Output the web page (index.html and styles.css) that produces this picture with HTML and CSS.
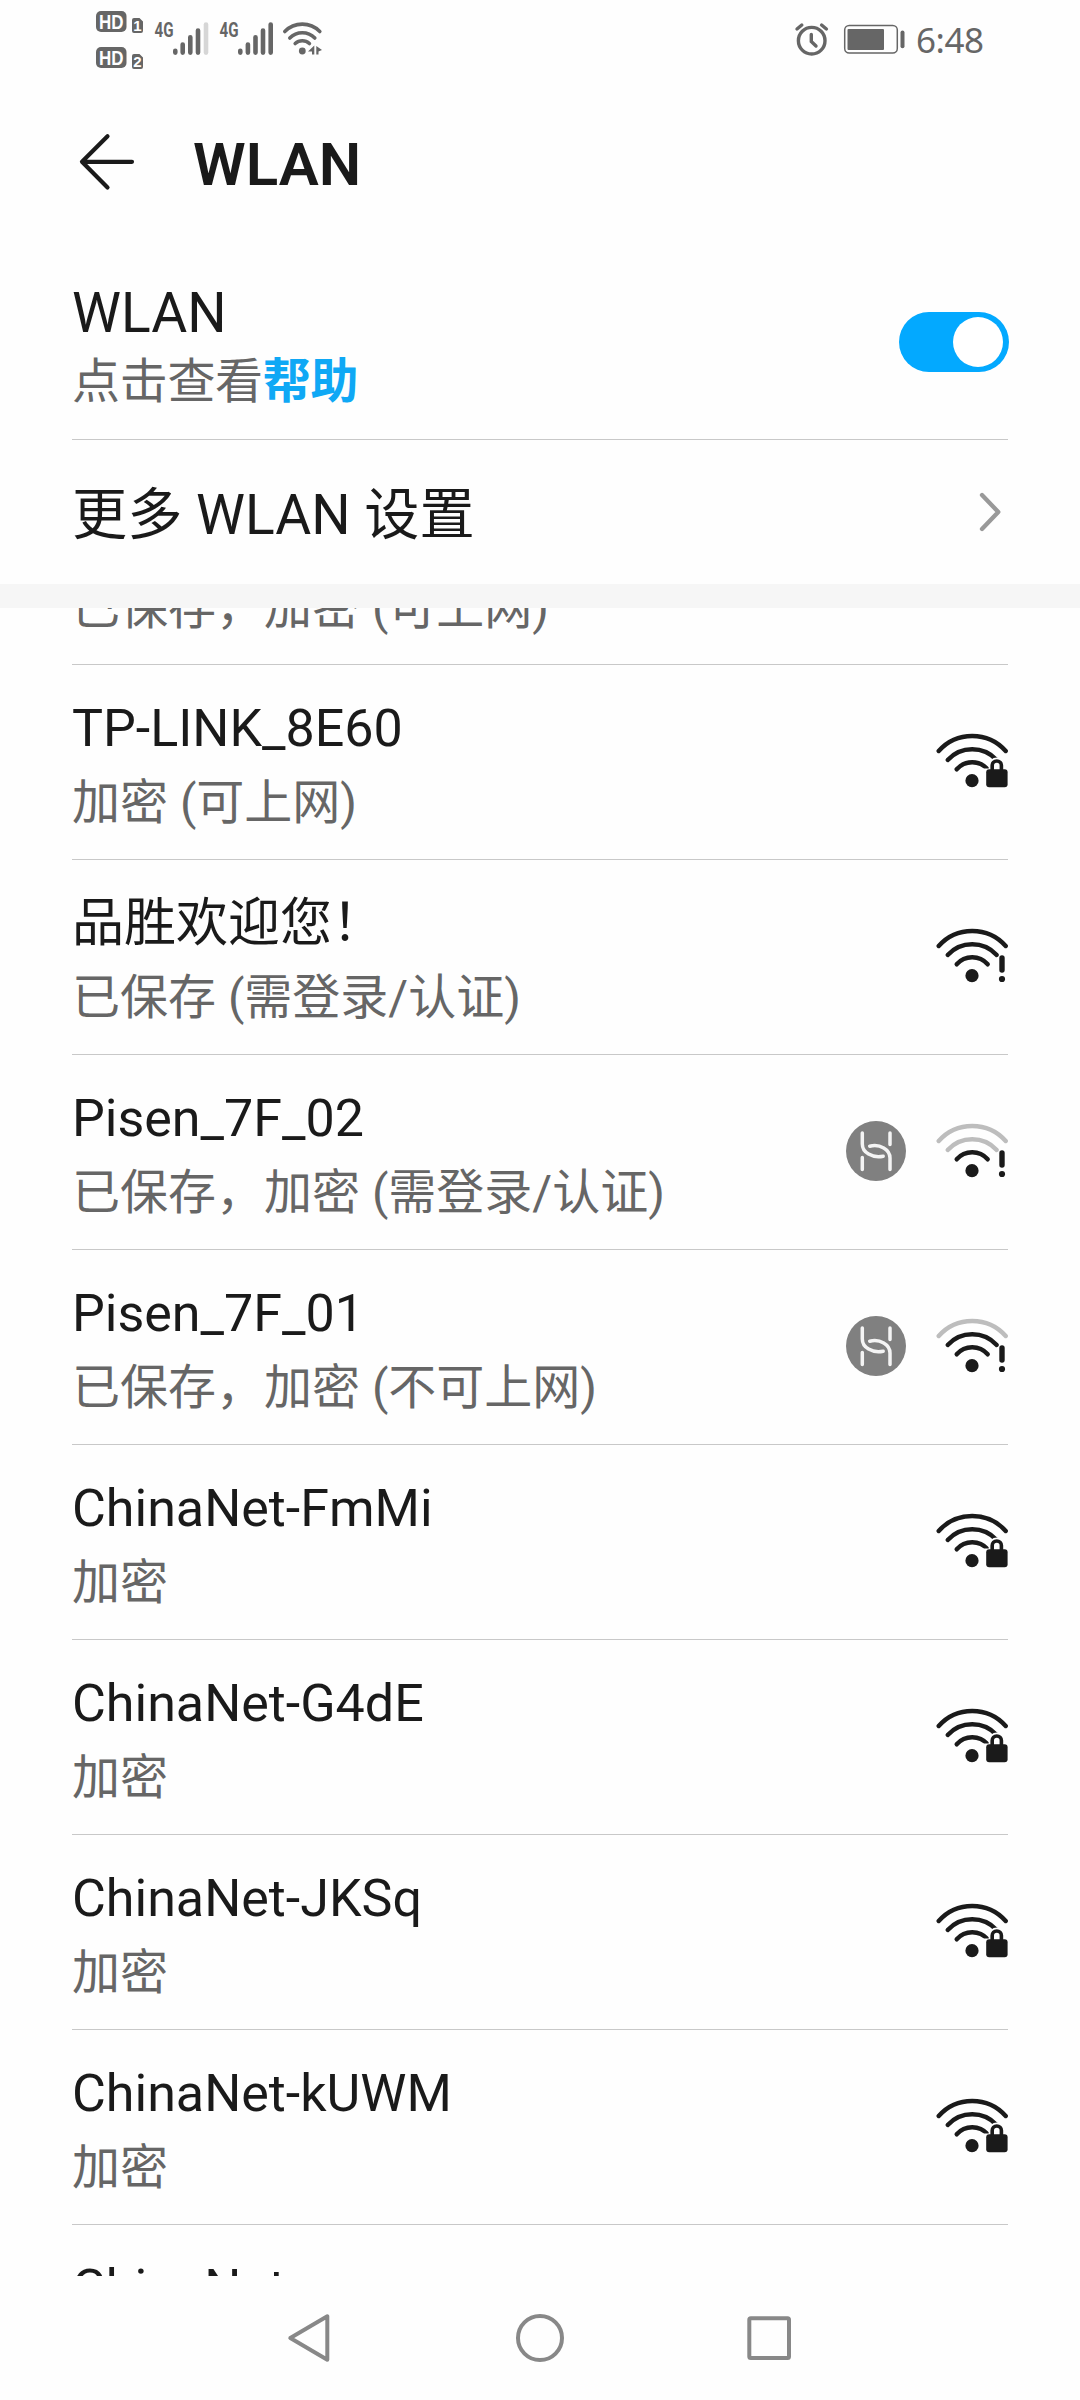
FILE: index.html
```html
<!DOCTYPE html>
<html lang="zh-CN">
<head>
<meta charset="utf-8">
<title>WLAN</title>
<link rel="stylesheet" href="styles.css">
</head>
<body>
<svg class="defs" width="0" height="0" aria-hidden="true">
  <symbol id="arc-outer" viewBox="0 0 72 60"><path class="arc" d="M2.7 19A44.9 44.9 0 0 1 69.7 19"/></symbol>
  <symbol id="arc-mid" viewBox="0 0 72 60"><path class="arc" d="M11.7 28A33.4 33.4 0 0 1 60.7 28"/></symbol>
  <symbol id="arc-inner" viewBox="0 0 72 60"><path class="arc" d="M20.7 37.3A20.6 20.6 0 0 1 51.7 37.3"/><circle cx="36" cy="48.7" r="6.6" fill="currentColor"/></symbol>
  <symbol id="bang" viewBox="0 0 72 60"><path d="M66 31V43" stroke="currentColor" stroke-width="5.4" stroke-linecap="round"/><circle cx="66" cy="52" r="3.1" fill="currentColor"/></symbol>
  <symbol id="wifi-lock" viewBox="0 0 72 60">
    <use href="#arc-outer"/><use href="#arc-mid"/><use href="#arc-inner"/>
    <path class="halo" d="M56.2 38V33.5A4.6 4.6 0 0 1 65.4 33.5V38M50.5 40H71V54H50.5z"/>
    <path d="M56.2 40V33.6A4.6 4.6 0 0 1 65.4 33.6V40" fill="none" stroke="currentColor" stroke-width="3.6"/>
    <rect x="50.2" y="37.3" width="21.4" height="18" rx="3" fill="currentColor"/>
  </symbol>
  <symbol id="link-h" viewBox="0 0 60 60">
    <circle cx="30" cy="30" r="30" fill="#808080"/>
    <path class="hline" d="M16.3 12V23C16.3 31.5 26 37.3 37.2 35.2M44 48.5V37C44 28.5 34 22.7 23.7 25.2M44 12V23.5M16.3 36.5V48.5"/>
  </symbol>
</svg>
<div class="screen">
  <header class="status">
    <svg width="248" height="80" viewBox="80 0 248 80" fill="#666">
      <rect x="96" y="11" width="30.5" height="21" rx="5"/><rect x="96" y="47" width="30.5" height="21" rx="5"/>
      <path d="M134 18H139.500L143 21.500V31Q143 33 141 33H134Q132 33 132 31V20Q132 18 134 18zM134 54H139.500L143 57.500V67Q143 69 141 69H134Q132 69 132 67V56Q132 54 134 54z"/>
      <g class="hd"><text x="99" y="28.5" textLength="24.5" lengthAdjust="spacingAndGlyphs">HD</text><text x="99" y="64.5" textLength="24.5" lengthAdjust="spacingAndGlyphs">HD</text></g>
      <g class="sim"><text x="137.5" y="30.5">1</text><text x="137.5" y="66.5">2</text></g>
      <g class="net"><text x="154.5" y="36.5" textLength="19" lengthAdjust="spacingAndGlyphs">4G</text><text x="219.5" y="36.5" textLength="19" lengthAdjust="spacingAndGlyphs">4G</text></g>
      <g stroke="#666" stroke-width="4.6" stroke-linecap="round" fill="none">
        <path d="M175.3 50.7V52.6M182.7 44.5V52.6M190.3 37.3V52.6M198 30.6V52.6"/>
        <path d="M206 24.5V52.6" stroke="#d6d6d6"/>
        <path d="M240.3 50.7V52.6M247.9 44.5V52.6M255.5 37.3V52.6M263 30.6V52.6M270.7 24.5V52.6"/>
        <path stroke-width="3.6" d="M284.8 31.5A24.5 24.5 0 0 1 319.8 31.5M289.8 38A17.5 17.5 0 0 1 314.8 38M295.2 43.5A10.5 10.5 0 0 1 309.4 43.5"/>
      </g>
      <circle cx="302.3" cy="51" r="3.4"/>
      <path d="M308 51.5L314.3 45.5V54.5H312V51.5zM316.3 46L322 50L318.5 51.5V54.5H316.3z"/>
    </svg>
    <div class="status-right">
      <svg width="116" height="80" viewBox="792 0 116 80" fill="none" stroke="#666" stroke-linecap="round">
        <circle cx="811.7" cy="40.7" r="13.3" stroke-width="3.4"/>
        <path stroke-width="3.4" d="M811.3 34.5V41.5L816 46M797 29L801.8 25M821.6 25L826.4 29"/>
        <rect x="844.7" y="25.5" width="52.6" height="27.6" rx="4.5" stroke-width="1.5"/>
        <rect x="847.5" y="29" width="36.5" height="21" rx="1" fill="#666" stroke="none"/>
        <path d="M902.5 32.5V46.3" stroke-width="4"/>
      </svg>
      <span class="clock">6:48</span>
    </div>
  </header>
  <div class="titlebar">
    <svg width="58" height="58" viewBox="78 133 58 58"><path d="M107.5 136.2L82 161.8L107.5 187.4M82 161.8H132" fill="none" stroke="#1a1a1a" stroke-width="4.2" stroke-linecap="round" stroke-linejoin="round"/></svg>
    <h1 class="title">WLAN</h1>
  </div>
  <section class="setting toggle-row">
    <div class="toggle-text">
      <div class="label">WLAN</div>
      <div class="sub hint">点击查看<a class="help">帮助</a></div>
    </div>
    <span class="switch"><span class="knob"></span></span>
  </section>
  <section class="setting more-row">
    <div class="label more">更多 WLAN 设置</div>
    <svg class="chevron" width="24" height="42" viewBox="0 0 24 42"><path d="M4 4L20.3 21L4 38" fill="none" stroke="#999" stroke-width="4.3" stroke-linecap="round" stroke-linejoin="round"/></svg>
  </section>
  <div class="band"></div>
  <main class="list">
    <div class="row row-first"><div class="sub">已保存，加密 (可上网)</div></div>
    <div class="row"><div class="info"><div class="name">TP-LINK_8E60</div><div class="sub">加密 (可上网)</div></div><div class="icons"><svg class="wifi"><use href="#wifi-lock"/></svg></div></div>
    <div class="row"><div class="info"><div class="name">品胜欢迎您！</div><div class="sub">已保存 (需登录/认证)</div></div><div class="icons"><svg class="wifi"><use href="#arc-outer"/><use href="#arc-mid"/><use href="#arc-inner"/><use href="#bang"/></svg></div></div>
    <div class="row"><div class="info"><div class="name">Pisen_7F_02</div><div class="sub">已保存，加密 (需登录/认证)</div></div><div class="icons"><svg class="link"><use href="#link-h"/></svg><svg class="wifi"><use class="weak" href="#arc-outer"/><use class="weak" href="#arc-mid"/><use href="#arc-inner"/><use href="#bang"/></svg></div></div>
    <div class="row"><div class="info"><div class="name">Pisen_7F_01</div><div class="sub">已保存，加密 (不可上网)</div></div><div class="icons"><svg class="link"><use href="#link-h"/></svg><svg class="wifi"><use class="weak" href="#arc-outer"/><use href="#arc-mid"/><use href="#arc-inner"/><use href="#bang"/></svg></div></div>
    <div class="row"><div class="info"><div class="name">ChinaNet-FmMi</div><div class="sub">加密</div></div><div class="icons"><svg class="wifi"><use href="#wifi-lock"/></svg></div></div>
    <div class="row"><div class="info"><div class="name">ChinaNet-G4dE</div><div class="sub">加密</div></div><div class="icons"><svg class="wifi"><use href="#wifi-lock"/></svg></div></div>
    <div class="row"><div class="info"><div class="name">ChinaNet-JKSq</div><div class="sub">加密</div></div><div class="icons"><svg class="wifi"><use href="#wifi-lock"/></svg></div></div>
    <div class="row"><div class="info"><div class="name">ChinaNet-kUWM</div><div class="sub">加密</div></div><div class="icons"><svg class="wifi"><use href="#wifi-lock"/></svg></div></div>
    <div class="row row-last"><div class="name">ChinaNet-</div></div>
  </main>
  <nav class="nav">
    <svg width="52" height="52" viewBox="0 0 52 52"><path d="M42.300 4.300V47.700L5.300 26z"/></svg>
    <svg width="52" height="52" viewBox="0 0 52 52"><circle cx="26" cy="26" r="22"/></svg>
    <svg width="52" height="52" viewBox="0 0 52 52"><rect x="6.300" y="6.200" width="39.700" height="39.700" rx="1.500"/></svg>
  </nav>
</div>
</body>
</html>
```
FILE: styles.css
```css
* { box-sizing: border-box; }
body {
  margin: 0;
  background: #fefefe;
  color: #1a1a1a;
  font-family: Roboto, "Noto Sans CJK SC", sans-serif;
}
svg { display: block; flex: none; }
.defs { position: absolute; }
.screen {
  width: 1080px;
  height: 2400px;
  display: flex;
  flex-direction: column;
  overflow: hidden;
}
.status {
  height: 80px;
  padding: 0 97px 0 80px;
  display: flex;
  justify-content: space-between;
  flex: none;
}
.status-right { display: flex; align-items: center; gap: 8px; }
.clock {
  font: 35px/40px "Noto Sans", sans-serif;
  color: #666;
  width: 67px;
  letter-spacing: -0.5px;
}
.hd { font: 700 20px "Liberation Sans", sans-serif; fill: #fff; }
.sim { font: 700 15px "Liberation Sans", sans-serif; fill: #fff; text-anchor: middle; }
.net { font: 700 20px Roboto, sans-serif; }
.titlebar {
  height: 165px;
  flex: none;
  padding: 0 78px;
  display: flex;
  align-items: center;
  gap: 57px;
}
.titlebar svg { margin-bottom: 2px; }
.title { margin: 4px 0 0; font-size: 60px; line-height: 70px; font-weight: 600; }
.setting {
  margin: 0 72px;
  flex: none;
  display: flex;
  align-items: center;
  justify-content: space-between;
}
.toggle-row { height: 195px; border-bottom: 1px solid #c8c8c8; }
.toggle-text { padding-top: 6px; }
.more-row { height: 144px; }
.label { font-size: 55.2px; line-height: 64px; }
.more { padding-top: 6px; }
.sub { font-size: 48px; line-height: 56px; color: #666; white-space: nowrap; }
.hint { margin-top: 9px; letter-spacing: -0.3px; }
.help { color: #0fa8f5; font-weight: 700; }
.switch {
  width: 110px;
  height: 60px;
  margin-right: -1px;
  padding: 5px 6px;
  border-radius: 30px;
  background: #03a9ff;
  display: flex;
  justify-content: flex-end;
}
.knob { width: 50px; height: 50px; border-radius: 50%; background: #fff; }
.chevron { margin-right: 6px; }
.band { height: 24px; flex: none; background: #f6f6f6; }
.list { height: 1668px; flex: none; padding: 0 72px; overflow: hidden; }
.row {
  height: 195px;
  border-bottom: 1px solid #c8c8c8;
  display: flex;
  justify-content: space-between;
  align-items: center;
}
.row-first { height: 57px; padding-bottom: 28px; align-items: flex-end; overflow: hidden; }
.row-last { border: 0; padding-top: 33px; align-items: flex-start; }
.info { padding-top: 4px; }
.name { font-size: 52px; line-height: 61px; margin-bottom: 16px; white-space: nowrap; }
.icons { display: flex; align-items: center; gap: 30px; }
.wifi { width: 72px; height: 60px; }
.link { width: 60px; height: 60px; margin-bottom: 2px; }
.arc { fill: none; stroke: currentColor; stroke-width: 4.4; stroke-linecap: round; }
.weak { color: #bdbdbd; }
.halo { fill: #fefefe; stroke: #fefefe; stroke-width: 7; }
.hline { fill: none; stroke: #f4f4f4; stroke-width: 3.5; stroke-linecap: round; }
.nav {
  flex: 1;
  display: flex;
  justify-content: center;
  gap: 177px;
  align-items: center;
}
.nav svg { fill: none; stroke: #888; stroke-width: 4; stroke-linejoin: round; }
```
